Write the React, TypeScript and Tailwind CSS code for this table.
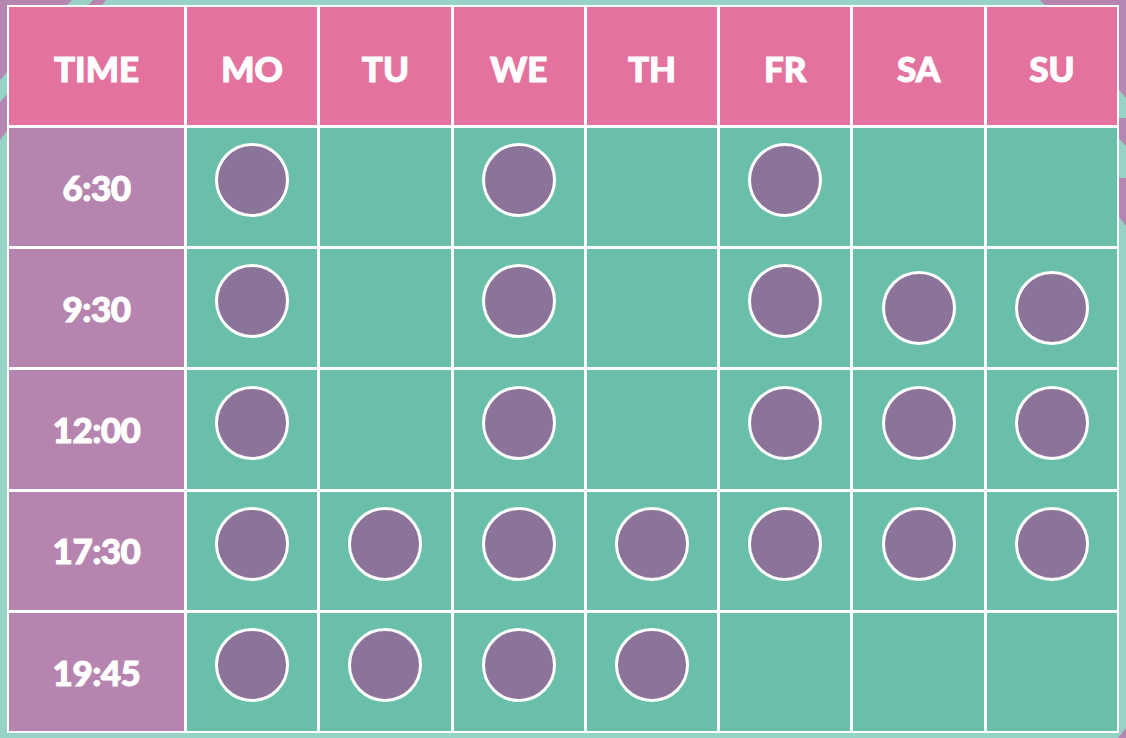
import { Fragment } from 'react'

const days = ['MO', 'TU', 'WE', 'TH', 'FR', 'SA', 'SU']

// 1 = class on that day, 2 = class (circle sits a bit lower)
const schedule = [
  { time: '6:30', slots: [1, 0, 1, 0, 1, 0, 0] },
  { time: '9:30', slots: [1, 0, 1, 0, 1, 2, 2] },
  { time: '12:00', slots: [1, 0, 1, 0, 1, 1, 1] },
  { time: '17:30', slots: [1, 1, 1, 1, 1, 1, 1] },
  { time: '19:45', slots: [1, 1, 1, 1, 0, 0, 0] },
]

function Backdrop() {
  return (
    <svg
      className="absolute inset-0 h-full w-full"
      viewBox="0 0 1126 738"
      preserveAspectRatio="none"
      aria-hidden="true"
    >
      <rect width="1126" height="738" fill="#97d2c7" />
      {/* top-left stripes */}
      <polygon points="0,0 72,0 0,80" fill="#b486b1" />
      <polygon points="93,0 106,0 0,140 0,102" fill="#b486b1" />
      {/* top-right stripes */}
      <polygon points="1040,0 1126,0 1126,98" fill="#b486b1" />
      <polygon points="1126,118 1126,146 1100,118" fill="#b486b1" />
      <polygon points="1126,178 1126,226 1090,178" fill="#b486b1" />
      {/* bottom-right nub */}
      <polygon points="1126,728 1126,738 1118,738" fill="#b486b1" />
    </svg>
  )
}

export default function App() {
  return (
    <div className="relative h-[738px] w-[1126px] overflow-hidden font-['Lato',sans-serif]">
      <Backdrop />
      <div className="relative pl-[7px] pt-[5px]">
        <div className="grid h-[728px] w-[1112px] grid-cols-[175px_repeat(7,1fr)] grid-rows-6 gap-[3px] bg-white p-[2px]">
          {/* Header */}
          <div className="flex items-center justify-center bg-[#e4729f] pt-[5px] text-[35px] font-black text-white [-webkit-text-stroke:1px_white]">
            TIME
          </div>
          {days.map((day) => (
            <div
              key={day}
              className="flex items-center justify-center bg-[#e4729f] pt-[5px] text-[35px] font-black text-white [-webkit-text-stroke:1px_white]"
            >
              {day}
            </div>
          ))}

          {/* Rows */}
          {schedule.map((row) => (
            <Fragment key={row.time}>
              <div className="flex items-center justify-center bg-[#b585b0] text-[35px] font-black tracking-[-0.5px] text-white [-webkit-text-stroke:1px_white]">
                {row.time}
              </div>
              {row.slots.map((slot, i) => (
                <div key={i} className="flex items-center justify-center bg-[#6abfab]">
                  {slot === 1 && (
                    <div className="mb-[14px] h-[74px] w-[74px] rounded-full border-[3px] border-white bg-[#8b7399]" />
                  )}
                  {slot === 2 && (
                    <div className="h-[74px] w-[74px] rounded-full border-[3px] border-white bg-[#8b7399]" />
                  )}
                </div>
              ))}
            </Fragment>
          ))}
        </div>
      </div>
    </div>
  )
}
